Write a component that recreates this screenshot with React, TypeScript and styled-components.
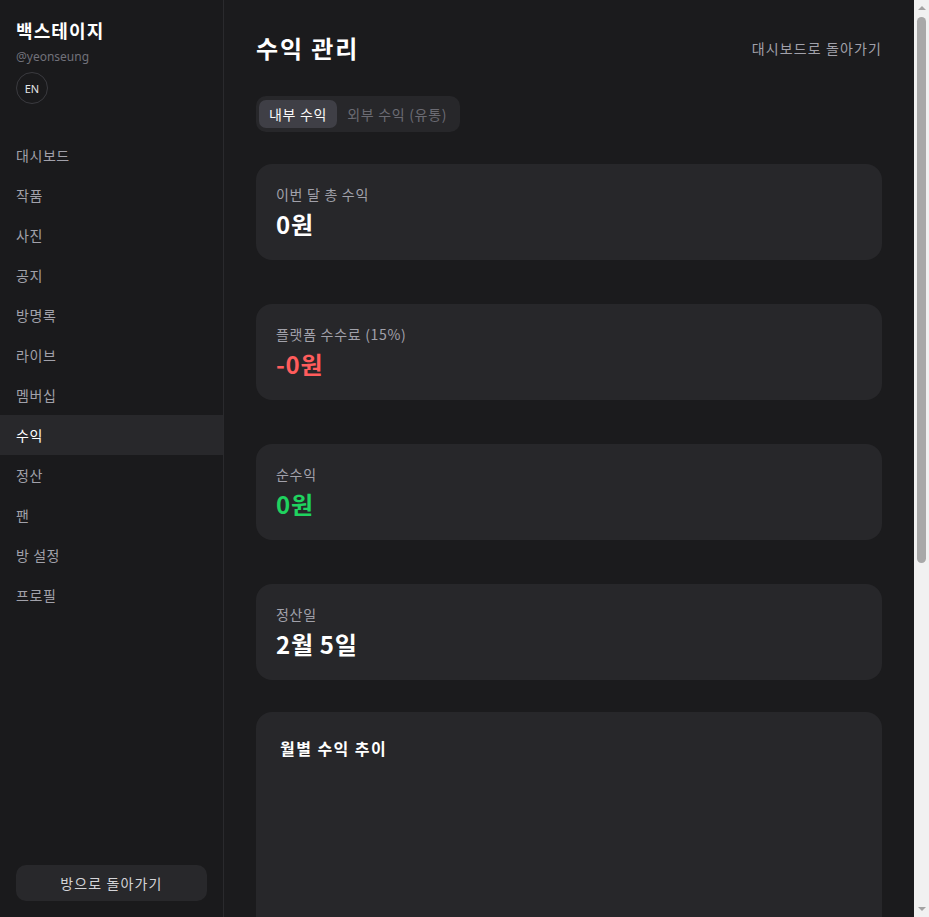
import * as React from 'react'
import styled, { createGlobalStyle } from 'styled-components'

const GlobalStyle = createGlobalStyle`
  html, body {
    margin: 0;
    padding: 0;
    background: #1b1b1d;
    color: #fafafa;
    font-family: "Noto Sans CJK KR", "Noto Sans", sans-serif;
    letter-spacing: 0.07em;
  }
  * {
    box-sizing: border-box;
  }
`

// stand-in for the browser scrollbar seen in the screenshot
const ScrollTrack = styled.div`
  position: fixed;
  top: 0;
  right: 0;
  bottom: 0;
  width: 15px;
  background: #f1f1f1;
  display: flex;
  flex-direction: column;
  align-items: center;
  justify-content: space-between;
  padding: 5px 0;
`

const ScrollArrow = styled.div<{ $down?: boolean }>`
  width: 0;
  height: 0;
  border-left: 4px solid transparent;
  border-right: 4px solid transparent;
  ${p => (p.$down ? 'border-top: 4px solid #a3a3a3;' : 'border-bottom: 4px solid #a3a3a3;')}
  margin-${p => (p.$down ? 'bottom' : 'top')}: 1px;
`

const ScrollThumb = styled.div`
  position: absolute;
  top: 17px;
  left: 3px;
  width: 9px;
  height: 546px;
  border-radius: 5px;
  background: #a8a8a8;
`

const Layout = styled.div`
  display: flex;
  min-height: 100vh;
  margin-right: 15px;
`

const Sidebar = styled.aside`
  position: sticky;
  top: 0;
  width: 224px;
  height: 100vh;
  flex-shrink: 0;
  display: flex;
  flex-direction: column;
  background: #1a1a1c;
  border-right: 1px solid #2a2a2d;
`

const SidebarHead = styled.div`
  padding: 16px 16px 0;
`

const Brand = styled.h1`
  margin: 0;
  font-size: 18px;
  line-height: 28px;
  font-weight: 700;
  color: #fff;
`

const Handle = styled.div`
  margin-top: 5px;
  font-family: "Noto Sans", sans-serif;
  font-size: 12px;
  line-height: 16px;
  letter-spacing: 0;
  color: #71717a;
`

const LangButton = styled.button`
  margin-top: 7px;
  width: 32px;
  height: 32px;
  border-radius: 50%;
  border: 1px solid #3a3a3f;
  background: transparent;
  color: #e4e4e7;
  font-family: "Noto Sans", sans-serif;
  font-size: 11px;
  letter-spacing: 0;
  padding: 0;
  display: flex;
  align-items: center;
  justify-content: center;
`

const Nav = styled.nav`
  margin-top: 31px;
  display: flex;
  flex-direction: column;
  flex: 1;
`

const NavItem = styled.a<{ $active?: boolean }>`
  display: flex;
  align-items: center;
  height: 40px;
  padding: 0 16px;
  font-size: 14px;
  letter-spacing: 0.04em;
  color: ${p => (p.$active ? '#fff' : '#a1a1aa')};
  background: ${p => (p.$active ? '#28282b' : 'transparent')};
  text-decoration: none;
`

const SidebarFoot = styled.div`
  padding: 0 16px 16px;
`

const BackRoomButton = styled.button`
  width: 100%;
  height: 36px;
  border: 0;
  border-radius: 10px;
  background: #28282b;
  color: #d4d4d8;
  font-family: inherit;
  letter-spacing: inherit;
  font-size: 14px;
`

const Main = styled.main`
  flex: 1;
  padding: 32px;
  min-width: 0;
`

const Header = styled.div`
  display: flex;
  align-items: center;
  justify-content: space-between;
  margin-bottom: 32px;
`

const Title = styled.h2`
  margin: 0;
  font-size: 24px;
  line-height: 32px;
  font-weight: 700;
  letter-spacing: 0.08em;
  color: #fff;
`

const BackLink = styled.a`
  font-size: 14px;
  color: #a1a1aa;
  text-decoration: none;
`

const Tabs = styled.div`
  display: inline-flex;
  padding: 4px 3px;
  border-radius: 10px;
  background: #27272a;
  margin-bottom: 32px;
`

const Tab = styled.button<{ $active?: boolean }>`
  height: 28px;
  padding: 0 10px;
  border: 0;
  border-radius: 7px;
  font-family: inherit;
  letter-spacing: 0.05em;
  font-size: 14px;
  background: ${p => (p.$active ? '#3f3f46' : 'transparent')};
  color: ${p => (p.$active ? '#fafafa' : '#6b6b73')};
`

const Cards = styled.div`
  display: flex;
  flex-direction: column;
  gap: 44px;
`

const StatCard = styled.div`
  padding: 20px;
  border-radius: 16px;
  background: #27272a;
`

const StatLabel = styled.div`
  font-size: 14px;
  line-height: 20px;
  letter-spacing: 0.05em;
  color: #a1a1aa;
`

const StatValue = styled.div<{ $tone?: 'red' | 'green' }>`
  margin-top: 4px;
  font-size: 24px;
  line-height: 32px;
  font-weight: 700;
  letter-spacing: 0.03em;
  color: ${p => (p.$tone === 'red' ? '#ff5c5c' : p.$tone === 'green' ? '#1fd35f' : '#fff')};
`

const ChartCard = styled.div`
  margin-top: 32px;
  padding: 24px;
  border-radius: 16px;
  background: #27272a;
  height: 739px;
`

const ChartTitle = styled.h3`
  margin: 0;
  font-size: 16px;
  line-height: 24px;
  font-weight: 700;
  letter-spacing: 0.09em;
  color: #fff;
`

const navItems = ['대시보드', '작품', '사진', '공지', '방명록', '라이브', '멤버십', '수익', '정산', '팬', '방 설정', '프로필']

const stats: { label: string, value: string, tone?: 'red' | 'green' }[] = [
  { label: '이번 달 총 수익', value: '0원' },
  { label: '플랫폼 수수료 (15%)', value: '-0원', tone: 'red' },
  { label: '순수익', value: '0원', tone: 'green' },
  { label: '정산일', value: '2월 5일' }
]

export default function App() {
  return (
    <>
      <GlobalStyle />
      <Layout>
        <Sidebar>
          <SidebarHead>
            <Brand>백스테이지</Brand>
            <Handle>@yeonseung</Handle>
            <LangButton>EN</LangButton>
          </SidebarHead>
          <Nav>
            {navItems.map(item => (
              <NavItem key={item} href="#" $active={item === '수익'}>{item}</NavItem>
            ))}
          </Nav>
          <SidebarFoot>
            <BackRoomButton>방으로 돌아가기</BackRoomButton>
          </SidebarFoot>
        </Sidebar>

        <Main>
          <Header>
            <Title>수익 관리</Title>
            <BackLink href="#">대시보드로 돌아가기</BackLink>
          </Header>

          <Tabs>
            <Tab $active>내부 수익</Tab>
            <Tab>외부 수익 (유통)</Tab>
          </Tabs>

          <Cards>
            {stats.map(s => (
              <StatCard key={s.label}>
                <StatLabel>{s.label}</StatLabel>
                <StatValue $tone={s.tone}>{s.value}</StatValue>
              </StatCard>
            ))}
          </Cards>

          <ChartCard>
            <ChartTitle>월별 수익 추이</ChartTitle>
          </ChartCard>
        </Main>
      </Layout>

      <ScrollTrack>
        <ScrollArrow />
        <ScrollThumb />
        <ScrollArrow $down />
      </ScrollTrack>
    </>
  )
}
